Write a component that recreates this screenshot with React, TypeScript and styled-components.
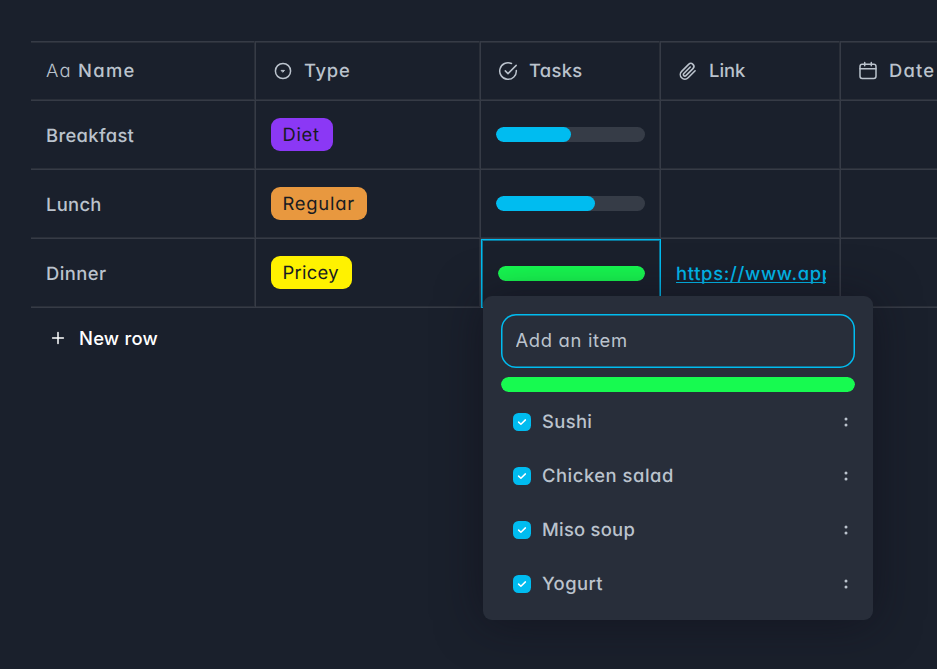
import React from "react";
import styled, { createGlobalStyle } from "styled-components";

const color = {
  page: "#1a202c",
  panel: "#282e3a",
  line: "#363b46",
  lineSoft: "#2a2f39",
  text: "#bbc3cd",
  accent: "#00bcf0",
  track: "#363c47",
  done: "#17fa50",
};

const GlobalStyle = createGlobalStyle`
  html, body { margin: 0; background: ${color.page}; }
  body {
    width: 937px;
    height: 669px;
    overflow: hidden;
    color: ${color.text};
    font-family: Inter, "Noto Sans", sans-serif;
    font-size: 18.4px;
    font-weight: 540;
    line-height: 24px;
    font-feature-settings: "cv11";
    text-rendering: geometricPrecision;
  }
  *, *::before, *::after { box-sizing: border-box; }
`;

const Page = styled.main`
  height: 669px;
  padding: 41px 0 0 31px;
  overflow: hidden;
`;

const Table = styled.div`
  width: 1021px;
`;

const Row = styled.div`
  display: grid;
  grid-template-columns: 225px 225px 180px 180px 211px;
  height: 69px;
`;

const HeaderRow = styled(Row)`
  height: 60px;
  box-shadow: inset 0 1px ${color.line}, inset 0 2px ${color.lineSoft};
`;

const Cell = styled.div<{ $selected?: boolean; $text?: boolean }>`
  position: relative;
  display: flex;
  align-items: center;
  min-width: 0;
  padding: ${(p) => (p.$selected ? "0 16px 0 17px" : p.$text ? "0 15px" : "0 16px 2px 15px")};
  box-shadow: ${(p) =>
    p.$selected
      ? `inset 0 0 0 1px ${color.accent}, inset 0 0 0 2px #0b7596`
      : `inset -1px -1px ${color.line}, inset -2px -2px ${color.lineSoft}`};
`;

const HeaderCell = styled(Cell)`
  padding: 0 0 0 17px;
`;

const Label = styled.span<{ $tracking?: number }>`
  white-space: nowrap;
  letter-spacing: ${(p) => p.$tracking ?? 0.4}px;
`;

const TextGlyph = styled.span`
  width: 32px;
  margin-left: -2px;
  font-weight: 350;
  letter-spacing: 1.2px;
`;

const Icon = styled.svg`
  flex: none;
  width: 20px;
  height: 20px;
  margin-right: 11px;
  fill: none;
  stroke: ${color.text};
  stroke-width: 1.5;
  stroke-linecap: round;
  stroke-linejoin: round;
`;

const Tag = styled.span<{ $bg: string; $width: number }>`
  display: flex;
  align-items: center;
  flex: none;
  width: ${(p) => p.$width}px;
  height: 33px;
  padding-left: 11.5px;
  border-radius: 9px;
  background: ${(p) => p.$bg};
  color: #171b22;
  font-weight: 430;
`;

const Track = styled.div`
  flex: 1;
  height: 15px;
  overflow: hidden;
  border-radius: 8px;
  background: ${color.track};
`;

const Fill = styled.div<{ $percent: number }>`
  width: ${(p) => p.$percent}%;
  height: 100%;
  border-radius: 8px;
  background: ${(p) => (p.$percent === 100 ? color.done : color.accent)};
`;

const Link = styled.a`
  overflow: hidden;
  color: ${color.accent};
  font-weight: 480;
  letter-spacing: 0.68px;
  white-space: nowrap;
  text-decoration: underline 1px;
  text-underline-offset: 2px;
  text-decoration-skip-ink: none;
`;

const NewRow = styled.button`
  display: flex;
  align-items: center;
  height: 60px;
  padding: 0 0 0 17px;
  border: 0;
  background: none;
  color: #fff;
  font: inherit;
  font-feature-settings: inherit;
`;

const PlusIcon = styled(Icon)`
  stroke: #fff;
`;

const Popover = styled.section`
  position: absolute;
  z-index: 2;
  top: 57px;
  left: 1.5px;
  width: 390px;
  height: 324px;
  padding: 18px 18px 9px;
  border-radius: 9px;
  background: ${color.panel};
  box-shadow: 0 2px 46px rgba(14, 12, 24, 0.55);
`;

const ItemInput = styled.input`
  display: block;
  width: 354px;
  height: 54px;
  padding: 0 15px 3px;
  border: 0;
  border-radius: 15px;
  outline: 0;
  background: transparent;
  box-shadow: inset 0 0 0 1.5px ${color.accent};
  color: ${color.text};
  font: inherit;
  font-weight: 430;
  font-feature-settings: inherit;
  letter-spacing: 0.68px;
  &::placeholder { color: ${color.text}; opacity: 1; }
`;

const PopoverProgress = styled.div`
  display: flex;
  margin: 9px 0 3px;
`;

const Item = styled.div`
  display: flex;
  align-items: center;
  height: 54px;
  padding: 0 7px 0 12px;
`;

const CheckBox = styled.span`
  display: grid;
  place-items: center;
  width: 18px;
  height: 18px;
  margin-right: 11.5px;
  border-radius: 5.5px;
  background: ${color.accent};
`;

const Dots = styled.svg`
  width: 4px;
  height: 12px;
  margin-left: auto;
  fill: ${color.text};
`;

const SelectIcon = () => (
  <Icon viewBox="0 0 20 20">
    <circle cx="10" cy="10" r="7.6" />
    <path d="M8.5 9.4h3L10 11z" fill={color.text} strokeWidth="1" />
  </Icon>
);

const TasksIcon = () => (
  <Icon viewBox="0 0 20 20">
    <path d="M18.3 9.4a8.3 8.3 0 1 1-4.8-6.9" />
    <path d="M7.3 9.9l2.7 2.7 8.2-8.2" />
  </Icon>
);

const LinkIcon = () => (
  <Icon viewBox="0 0 20 20">
    <path
      d="M21.44 11.05l-9.19 9.19a6 6 0 0 1-8.49-8.49l9.19-9.19a4 4 0 0 1 5.66 5.66l-9.2 9.19a2 2 0 0 1-2.83-2.83l8.49-8.48"
      transform="translate(.8 1.4) scale(.76)"
      strokeWidth="2.1"
    />
  </Icon>
);

const DateIcon = () => (
  <Icon viewBox="0 0 20 20">
    <rect x="2" y="3.3" width="16" height="14.2" rx="2.2" />
    <path d="M2 7.8h16M6.7 1.5v3.3M13.3 1.5v3.3" />
  </Icon>
);

const columns = [
  { name: "Type", tracking: 0.7, icon: <SelectIcon /> },
  { name: "Tasks", tracking: 0.3, icon: <TasksIcon /> },
  { name: "Link", tracking: 0, icon: <LinkIcon /> },
  { name: "Date", tracking: 1.2, icon: <DateIcon /> },
];

const meals = [
  { name: "Breakfast", tracking: 0.32, percent: 50, tag: { name: "Diet", bg: "#8b38f5", width: 62, tracking: 0.65 } },
  { name: "Lunch", tracking: 0.3, percent: 66.7, tag: { name: "Regular", bg: "#e8983f", width: 96, tracking: 0.75 } },
  { name: "Dinner", tracking: 0.45, percent: 100, tag: { name: "Pricey", bg: "#fff200", width: 81, tracking: 0.3 } },
];

const tasks = [
  { name: "Sushi", tracking: 0.35 },
  { name: "Chicken salad", tracking: 0.52 },
  { name: "Miso soup", tracking: 0.25 },
  { name: "Yogurt", tracking: 0.42 },
];

const Progress = ({ percent }: { percent: number }) => (
  <Track>
    <Fill $percent={percent} />
  </Track>
);

const TaskPopover = () => (
  <Popover>
    <ItemInput placeholder="Add an item" />
    <PopoverProgress>
      <Progress percent={100} />
    </PopoverProgress>
    {tasks.map((task) => (
      <Item key={task.name}>
        <CheckBox>
          <svg width="10" height="8" viewBox="0 0 10 8" fill="none" stroke="#fff" strokeWidth="1.5" strokeLinecap="round" strokeLinejoin="round">
            <path d="M1.6 4.1l2.3 2.2 4.5-4.4" />
          </svg>
        </CheckBox>
        <Label $tracking={task.tracking}>{task.name}</Label>
        <Dots viewBox="0 0 4 12">
          <circle cx="2" cy="3.1" r="1.5" />
          <circle cx="2" cy="8.9" r="1.5" />
        </Dots>
      </Item>
    ))}
  </Popover>
);

export default function App() {
  return (
    <Page>
      <GlobalStyle />
      <Table>
        <HeaderRow>
          <HeaderCell>
            <TextGlyph>Aa</TextGlyph>
            <Label $tracking={1.3}>Name</Label>
          </HeaderCell>
          {columns.map((column) => (
            <HeaderCell key={column.name}>
              {column.icon}
              <Label $tracking={column.tracking}>{column.name}</Label>
            </HeaderCell>
          ))}
        </HeaderRow>
        {meals.map((meal) => {
          const selected = meal.name === "Dinner";
          return (
            <Row key={meal.name}>
              <Cell $text>
                <Label $tracking={meal.tracking}>{meal.name}</Label>
              </Cell>
              <Cell>
                <Tag $bg={meal.tag.bg} $width={meal.tag.width}>
                  <Label $tracking={meal.tag.tracking}>{meal.tag.name}</Label>
                </Tag>
              </Cell>
              <Cell $selected={selected}>
                <Progress percent={meal.percent} />
                {selected && <TaskPopover />}
              </Cell>
              <Cell $text>{selected && <Link>https://www.appflowy.io</Link>}</Cell>
              <Cell />
            </Row>
          );
        })}
      </Table>
      <NewRow>
        <PlusIcon viewBox="0 0 20 20">
          <path d="M10 4.6v10.8M4.6 10h10.8" />
        </PlusIcon>
        <Label $tracking={0.22}>New row</Label>
      </NewRow>
    </Page>
  );
}
